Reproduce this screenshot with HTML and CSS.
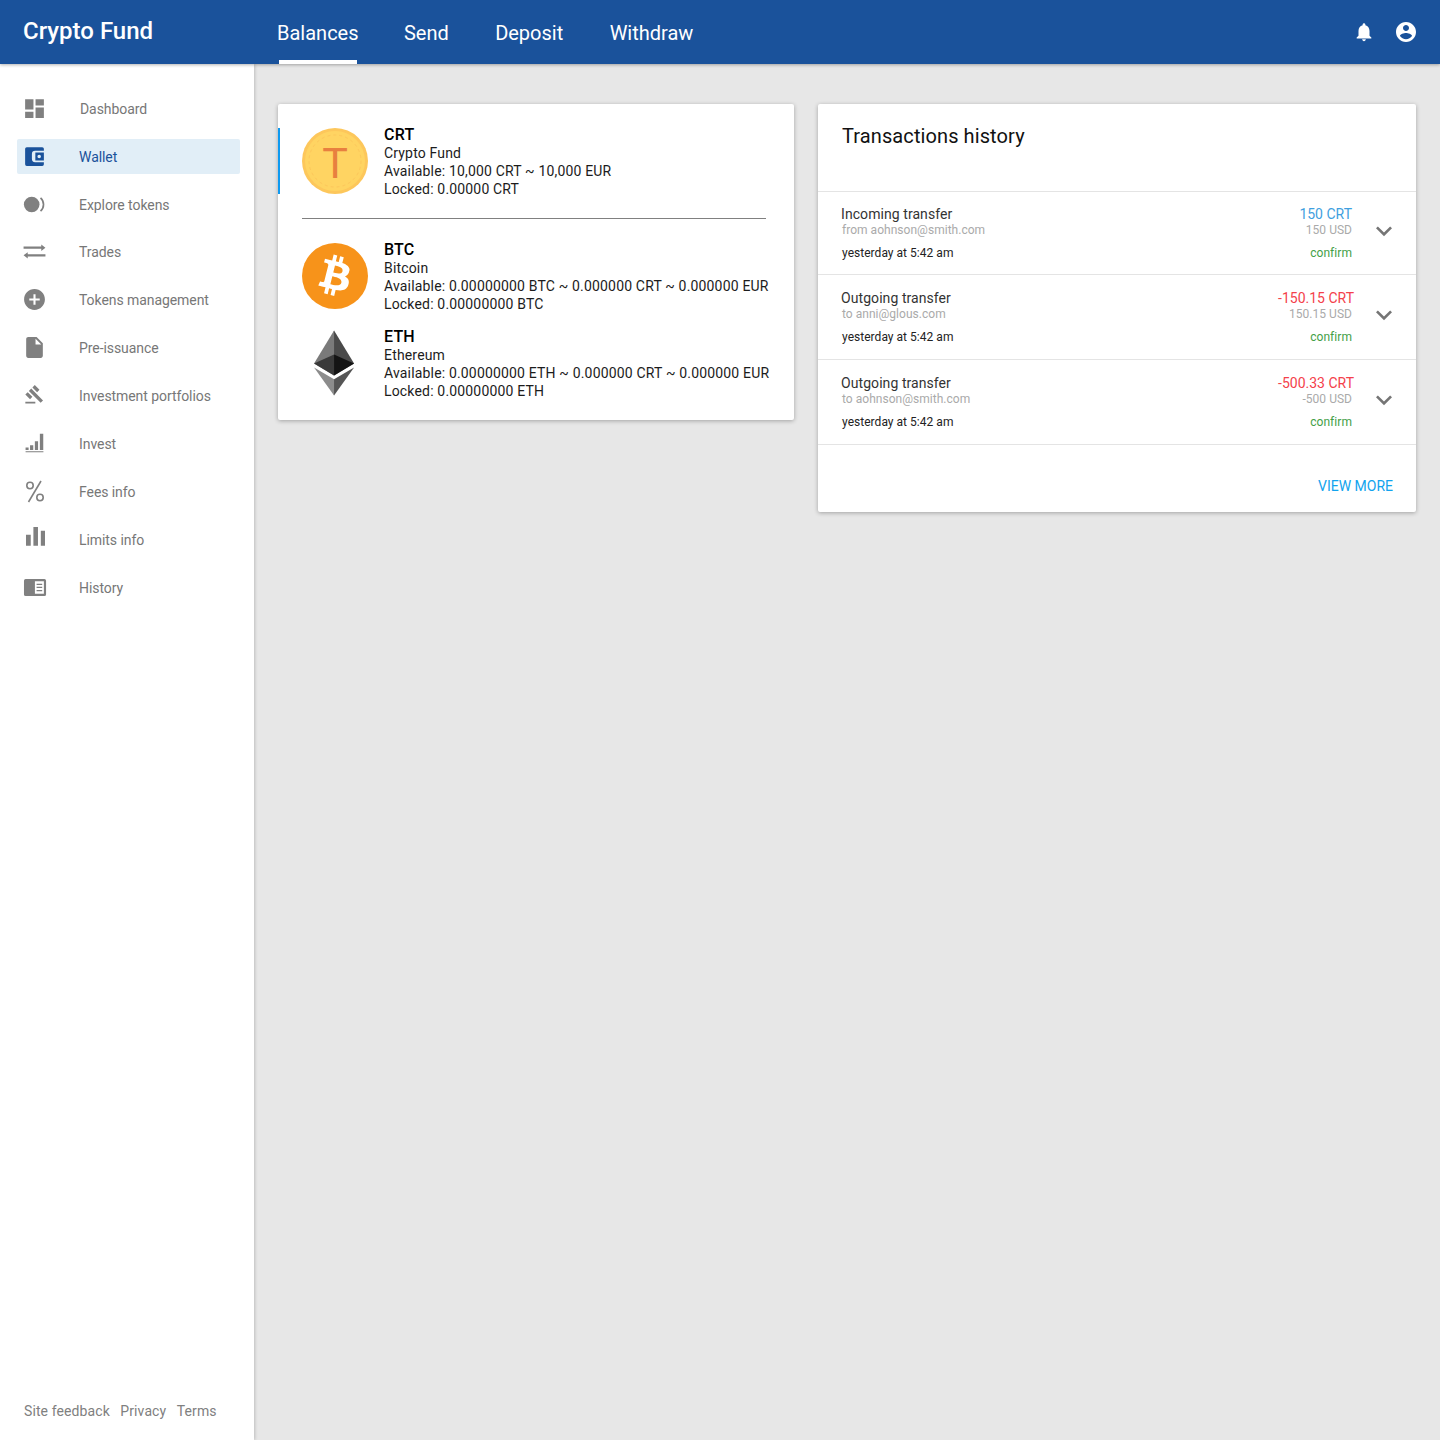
FILE: index.html
```html
<!DOCTYPE html>
<html lang="en">
<head>
    <meta charset="UTF-8">
    <meta name="viewport" content="width=device-width, initial-scale=1.0">
    <title>Crypto Fund</title>
    <link rel="stylesheet" href="styles.css">
</head>
<body>
    <header class="topbar">
        <div class="brand">Crypto Fund</div>
        <nav class="tabs">
            <a class="tab tab-active">Balances</a>
            <a class="tab">Send</a>
            <a class="tab">Deposit</a>
            <a class="tab">Withdraw</a>
        </nav>
        <div class="top-icons">
            <svg class="bell" viewBox="0 0 24 24"><path d="M12 22c1.1 0 2-.9 2-2h-4c0 1.1.89 2 2 2zm6-6v-5c0-3.07-1.64-5.64-4.5-6.32V4c0-.83-.67-1.5-1.5-1.5s-1.5.67-1.5 1.5v.68C7.63 5.36 6 7.92 6 11v5l-2 2v1h16v-1l-2-2z"/></svg>
            <svg class="account" viewBox="0 0 24 24"><path d="M12 2C6.48 2 2 6.48 2 12s4.48 10 10 10 10-4.48 10-10S17.52 2 12 2zm0 3c1.66 0 3 1.34 3 3s-1.34 3-3 3-3-1.34-3-3 1.34-3 3-3zm0 14.2c-2.5 0-4.71-1.28-6-3.22.03-1.99 4-3.08 6-3.08 1.99 0 5.97 1.09 6 3.08-1.29 1.94-3.5 3.22-6 3.22z"/></svg>
        </div>
    </header>

    <div class="layout">
        <aside class="sidebar">
            <ul class="menu">
                <li class="menu-item">
                    <span class="menu-link">
                        <svg class="menu-icon" viewBox="0 0 24 24"><path d="M3 13h8V3H3v10zm0 8h8v-6H3v6zm10 0h8V11h-8v10zm0-18v6h8V3h-8z"/></svg>
                        <span class="menu-label menu-label-first">Dashboard</span>
                    </span>
                </li>
                <li class="menu-item">
                    <span class="menu-link menu-link-active">
                        <svg class="menu-icon" viewBox="0 0 24 24"><path fill-rule="evenodd" d="M4.600 3h14.800a1.600 1.600 0 0 1 1.600 1.600V6.500h-8.500a3 3 0 0 0-3 3v5a3 3 0 0 0 3 3H21v1.900a1.600 1.600 0 0 1-1.600 1.600H4.600A1.600 1.600 0 0 1 3 19.400V4.600A1.600 1.600 0 0 1 4.600 3z"/><path fill-rule="evenodd" d="M12.800 8.200H21v7.600h-8.200zM16.500 10.300a1.700 1.700 0 1 0 0 3.400 1.700 1.700 0 0 0 0-3.400z"/></svg>
                        <span class="menu-label">Wallet</span>
                    </span>
                </li>
                <li class="menu-item menu-item-tight">
                    <span class="menu-link">
                        <svg class="menu-icon" viewBox="0 0 24 24"><circle cx="9.300" cy="12" r="7.500"/><path class="icon-line" d="M17.800 5.600a8.600 8.600 0 0 1 0 12.800"/></svg>
                        <span class="menu-label">Explore tokens</span>
                    </span>
                </li>
                <li class="menu-item">
                    <span class="menu-link">
                        <svg class="menu-icon" viewBox="0 0 24 24"><path d="M1.500 7.200h17V5.200l4 3.100-4 3.100V9.400h-17zM22.500 14.600h-17v-2l-4 3.100 4 3.100v-2h17z"/></svg>
                        <span class="menu-label">Trades</span>
                    </span>
                </li>
                <li class="menu-item">
                    <span class="menu-link">
                        <svg class="menu-icon" viewBox="0 0 24 24"><path d="M12 2C6.48 2 2 6.48 2 12s4.48 10 10 10 10-4.48 10-10S17.52 2 12 2zm5 11h-4v4h-2v-4H7v-2h4V7h2v4h4v2z"/></svg>
                        <span class="menu-label">Tokens management</span>
                    </span>
                </li>
                <li class="menu-item">
                    <span class="menu-link">
                        <svg class="menu-icon" viewBox="0 0 24 24"><path d="M6 2c-1.1 0-1.99.9-1.99 2L4 20c0 1.1.89 2 1.99 2H18c1.1 0 2-.9 2-2V8l-6-6H6zm7 7V3.500L18.500 9H13z"/></svg>
                        <span class="menu-label">Pre-issuance</span>
                    </span>
                </li>
                <li class="menu-item">
                    <span class="menu-link">
                        <svg class="menu-icon" viewBox="-3 -1.500 30 30"><path d="M1 21h12v2H1zM5.245 8.070l2.830-2.827 14.140 14.142-2.828 2.828zM12.317 1l5.657 5.656-2.830 2.830-5.654-5.660zM3.825 9.485l5.657 5.657-2.828 2.828-5.657-5.657z"/></svg>
                        <span class="menu-label">Investment portfolios</span>
                    </span>
                </li>
                <li class="menu-item">
                    <span class="menu-link">
                        <svg class="menu-icon" viewBox="-2 -1 28 28"><path d="M2 21.600h20v1.200H2zM2 17.600h3.400v2.600H2zM7 15h3.600v5.200H7zM12.400 10.600H16v9.600h-3.600zM18 2h3.800v18.200H18z"/></svg>
                        <span class="menu-label">Invest</span>
                    </span>
                </li>
                <li class="menu-item">
                    <span class="menu-link">
                        <svg class="menu-icon" viewBox="0 0 25 25"><circle class="icon-line" cx="8" cy="6.500" r="3.200"/><circle class="icon-line" cx="18" cy="18.500" r="3.200"/><path class="icon-line" d="M19 2 6.500 23"/></svg>
                        <span class="menu-label">Fees info</span>
                    </span>
                </li>
                <li class="menu-item">
                    <span class="menu-link">
                        <svg class="menu-icon" viewBox="-2.200 2.300 26.300 26.300"><path d="M2 10.500h5v11.500H2zM9.800 1.500h4.800V22H9.800zM17.600 6.200H22V22h-4.400z"/></svg>
                        <span class="menu-label">Limits info</span>
                    </span>
                </li>
                <li class="menu-item">
                    <span class="menu-link">
                        <svg class="menu-icon" viewBox="0 0 24 24"><path fill-rule="evenodd" d="M3.500 3.800h18a1.600 1.600 0 0 1 1.600 1.600v13.200a1.600 1.600 0 0 1-1.600 1.600h-18a1.600 1.600 0 0 1-1.600-1.600V5.400a1.600 1.600 0 0 1 1.600-1.600zM12.400 6v12h8.600V6zM14 8.300h5.400v1.200H14zM14 11.300h5.400v1.200H14zM14 14.300h5.400v1.200H14z"/></svg>
                        <span class="menu-label">History</span>
                    </span>
                </li>
            </ul>
            <footer class="side-footer">
                <a>Site feedback</a>
                <a>Privacy</a>
                <a>Terms</a>
            </footer>
        </aside>

        <main class="content">
            <section class="card balances">
                <div class="coin coin-selected">
                    <svg class="coin-icon" viewBox="0 0 66 66">
                        <circle cx="33" cy="33" r="33" fill="#fdc75b"/>
                        <circle cx="33" cy="33" r="30" fill="#ffd462"/>
                        <circle cx="33" cy="33" r="26" fill="none" stroke="#fdc75b" stroke-width="1" stroke-dasharray="3 3"/>
                        <text class="crt-letter" x="33" y="50" text-anchor="middle">T</text>
                    </svg>
                    <div class="coin-text">
                        <div class="coin-code">CRT</div>
                        <div>Crypto Fund</div>
                        <div>Available: 10,000 CRT ~ 10,000 EUR</div>
                        <div>Locked: 0.00000 CRT</div>
                    </div>
                </div>
                <hr class="coin-line">
                <div class="coin">
                    <svg class="coin-icon" viewBox="0 0 64 64">
                        <circle cx="32" cy="32" r="32" fill="#f7931a"/>
                        <path fill="#fff" d="M46.100 27.400c.6-4.200-2.600-6.500-7-8l1.400-5.700-3.500-.9-1.400 5.600c-.9-.2-1.900-.4-2.800-.7l1.400-5.600-3.500-.9-1.400 5.700c-.8-.2-1.500-.3-2.200-.5l-4.800-1.200-.9 3.700s2.600.6 2.500.6c1.400.4 1.700 1.300 1.600 2l-1.600 6.500-2.300 9.100c-.2.400-.6 1.100-1.600.8 0 .1-2.500-.6-2.500-.6l-1.700 4 4.500 1.100c.8.2 1.700.4 2.500.6l-1.400 5.800 3.500.9 1.400-5.700c1 .3 1.900.5 2.800.7l-1.400 5.700 3.500.9 1.400-5.800c5.900 1.100 10.400.7 12.300-4.700 1.500-4.300-.1-6.800-3.200-8.400 2.300-.5 3.900-2.500 4.300-6.100zM38.200 38.500c-1.100 4.300-8.300 2-10.700 1.400l1.900-7.700c2.400.6 9.900 1.800 8.800 6.300zM39.300 27.300c-1 3.900-7 1.900-9 1.400l1.700-6.900c2 .5 8.300 1.400 7.300 5.500z"/>
                    </svg>
                    <div class="coin-text">
                        <div class="coin-code">BTC</div>
                        <div>Bitcoin</div>
                        <div>Available: 0.00000000 BTC ~ 0.000000 CRT ~ 0.000000 EUR</div>
                        <div>Locked: 0.00000000 BTC</div>
                    </div>
                </div>
                <div class="coin coin-eth">
                    <svg class="coin-icon" viewBox="-77 0 422 417">
                        <polygon fill="#4a4a4a" points="128,0 125,10 125,285 128,288 256,212"/>
                        <polygon fill="#7a7a7a" points="128,0 0,212 128,288 128,154"/>
                        <polygon fill="#555" points="128,312 126,314 126,412 128,417 256,237"/>
                        <polygon fill="#8c8c8c" points="128,417 128,312 0,237"/>
                        <polygon fill="#141414" points="128,288 256,212 128,154"/>
                        <polygon fill="#393939" points="0,212 128,288 128,154"/>
                    </svg>
                    <div class="coin-text">
                        <div class="coin-code">ETH</div>
                        <div>Ethereum</div>
                        <div>Available: 0.00000000 ETH ~ 0.000000 CRT ~ 0.000000 EUR</div>
                        <div>Locked: 0.00000000 ETH</div>
                    </div>
                </div>
            </section>

            <section class="card history">
                <h2 class="history-title">Transactions history</h2>
                <div class="tx">
                    <div class="tx-main">
                        <div class="tx-name">Incoming transfer</div>
                        <div class="tx-sub">from aohnson@smith.com</div>
                        <div class="tx-time">yesterday at 5:42 am</div>
                    </div>
                    <div class="tx-side">
                        <div class="tx-amount tx-in">150 CRT</div>
                        <div class="tx-sub">150 USD</div>
                        <div class="tx-status">confirm</div>
                    </div>
                    <svg class="tx-chevron" viewBox="0 0 24 24"><path d="M16.59 8.59L12 13.17 7.41 8.59 6 10l6 6 6-6z"/></svg>
                </div>
                <div class="tx">
                    <div class="tx-main">
                        <div class="tx-name">Outgoing transfer</div>
                        <div class="tx-sub">to anni@glous.com</div>
                        <div class="tx-time">yesterday at 5:42 am</div>
                    </div>
                    <div class="tx-side">
                        <div class="tx-amount tx-out">-150.15 CRT</div>
                        <div class="tx-sub">150.15 USD</div>
                        <div class="tx-status">confirm</div>
                    </div>
                    <svg class="tx-chevron" viewBox="0 0 24 24"><path d="M16.59 8.59L12 13.17 7.41 8.59 6 10l6 6 6-6z"/></svg>
                </div>
                <div class="tx">
                    <div class="tx-main">
                        <div class="tx-name">Outgoing transfer</div>
                        <div class="tx-sub">to aohnson@smith.com</div>
                        <div class="tx-time">yesterday at 5:42 am</div>
                    </div>
                    <div class="tx-side">
                        <div class="tx-amount tx-out">-500.33 CRT</div>
                        <div class="tx-sub">-500 USD</div>
                        <div class="tx-status">confirm</div>
                    </div>
                    <svg class="tx-chevron" viewBox="0 0 24 24"><path d="M16.59 8.59L12 13.17 7.41 8.59 6 10l6 6 6-6z"/></svg>
                </div>
                <div class="history-foot"><a class="view-more">VIEW MORE</a></div>
            </section>
        </main>
    </div>
</body>
</html>
```

FILE: styles.css
```css
/* General */
* {
    box-sizing: border-box;
}

body {
    font-family: Roboto, "Liberation Sans", sans-serif;
    background-color: #e7e7e7;
    margin: 0;
    padding: 0;
    height: 1440px;
    overflow: hidden;
    display: flex;
    flex-direction: column;
}

/* Top bar */
.topbar {
    flex: none;
    height: 64px;
    background-color: #1a529b;
    color: white;
    display: flex;
    align-items: stretch;
    box-shadow: 0 1px 3px rgba(0, 0, 0, 0.3);
    position: relative;
    z-index: 2;
}

.brand {
    width: 277px;
    padding: 15px 0 0 23px;
    font-size: 24px;
    line-height: 32px;
    font-weight: 500;
}

.tabs {
    display: flex;
    flex: 1;
}

.tab {
    font-size: 20px;
    line-height: 24px;
    padding-top: 21px;
    margin-right: 46.4px;
    position: relative;
}

.tab-active {
    margin-right: 45.4px;
}

.tab-active::after {
    content: "";
    position: absolute;
    left: 2px;
    right: 2px;
    bottom: 0;
    height: 4px;
    background-color: white;
}

.top-icons {
    display: flex;
    align-items: center;
    padding-right: 22px;
    fill: white;
}

.bell {
    width: 22px;
    height: 22px;
    margin: -1px 19px 0 0;
}

.account {
    width: 24px;
    height: 24px;
}

/* Sidebar */
.layout {
    flex: 1;
    display: flex;
    min-height: 0;
}

.sidebar {
    flex: none;
    width: 254px;
    background-color: white;
    box-shadow: 1px 0 3px rgba(0, 0, 0, 0.18);
    padding: 20.5px 14px 19px 17px;
    display: flex;
    flex-direction: column;
    justify-content: space-between;
}

.menu {
    list-style: none;
    margin: 0;
    padding: 0;
}

.menu-item {
    height: 48px;
    display: flex;
    align-items: center;
}

.menu-item-tight {
    margin-bottom: -1px;
}

.menu-link {
    flex: 1;
    height: 35px;
    display: flex;
    align-items: center;
    padding-left: 5px;
    border-radius: 2px;
    color: #777;
    fill: #808080;
    font-size: 14px;
    letter-spacing: -0.07px;
}

.menu-link-active {
    background-color: #e1eef7;
    color: #1a529b;
    fill: #1a529b;
}

.menu-icon {
    flex: none;
    width: 25px;
    height: 25px;
}

.icon-line {
    fill: none;
    stroke: #808080;
    stroke-width: 1.6;
}

.menu-label {
    margin-left: 32px;
}

.menu-label-first {
    margin-left: 33px;
}

.side-footer {
    display: flex;
    gap: 10.5px;
    padding-left: 7px;
    font-size: 14px;
    line-height: 20px;
    letter-spacing: 0.1px;
    color: #808080;
}

/* Cards */
.content {
    flex: 1;
    display: flex;
    align-items: flex-start;
    gap: 24px;
    padding: 40px 24px 0 24px;
}

.card {
    background-color: white;
    border-radius: 2px;
    box-shadow: 0 1px 4px rgba(0, 0, 0, 0.3);
}

.balances {
    width: 516px;
    height: 316px;
    padding: 24px 24px 0 24px;
}

.coin {
    display: flex;
    position: relative;
}

.coin-selected::before {
    content: "";
    position: absolute;
    left: -24px;
    top: 0;
    width: 2px;
    height: 66px;
    background-color: #0f9af0;
}

.coin-icon {
    flex: none;
    width: 66px;
    height: 66px;
    margin-right: 16px;
}

.crt-letter {
    font-family: Roboto, sans-serif;
    font-size: 43px;
    font-weight: 400;
    fill: #e8803f;
}

.coin-text {
    margin: -3px 0 -4px;
    font-size: 14px;
    line-height: 18px;
    letter-spacing: 0.17px;
    color: #1c1c1c;
    white-space: nowrap;
}

.coin-code {
    font-size: 16px;
    line-height: 19px;
    font-weight: 500;
    letter-spacing: 0.2px;
    color: black;
}

.coin-line {
    width: 464px;
    height: 1px;
    margin: 24px 0;
    border: 0;
    background-color: #808080;
}

.coin-eth {
    margin-top: 21px;
}

.history {
    width: 598px;
}

.history-title {
    margin: 0;
    height: 88px;
    padding: 19px 24px 0 24px;
    font-size: 20px;
    line-height: 26px;
    font-weight: 400;
    letter-spacing: 0.1px;
    color: #111;
    border-bottom: 1px solid #e4e4e4;
}

.tx {
    display: flex;
    height: 85px;
    padding: 15px 16px 0 24px;
    border-bottom: 1px solid #e4e4e4;
}

.history-title + .tx {
    height: 83px;
    padding-top: 14px;
}

.tx-main {
    flex: 1;
}

.tx-name {
    margin-left: -1px;
    font-size: 14px;
    line-height: 16px;
    letter-spacing: 0.07px;
    color: #333;
}

.tx-sub {
    font-size: 12px;
    line-height: 16px;
    letter-spacing: 0.03px;
    color: #aaa;
}

.tx-time {
    margin-top: 7px;
    font-size: 12px;
    line-height: 16px;
    letter-spacing: 0.03px;
    color: #222;
}

.tx-side {
    text-align: right;
}

.tx-amount {
    font-size: 14px;
    line-height: 16px;
}

.tx-in {
    color: #3f9fe0;
}

.tx-out {
    margin-right: -2px;
    color: #f4414b;
}

.tx-status {
    margin-top: 7px;
    font-size: 12px;
    line-height: 16px;
    letter-spacing: 0.05px;
    color: #43a047;
}

.tx-chevron {
    flex: none;
    width: 32px;
    height: 32px;
    margin: 9px 0 0 16px;
    fill: #757575;
}

.history-foot {
    height: 67px;
    padding: 31px 23px 0 0;
    text-align: right;
}

.view-more {
    font-size: 14px;
    line-height: 16px;
    color: #11a3ee;
}
```
